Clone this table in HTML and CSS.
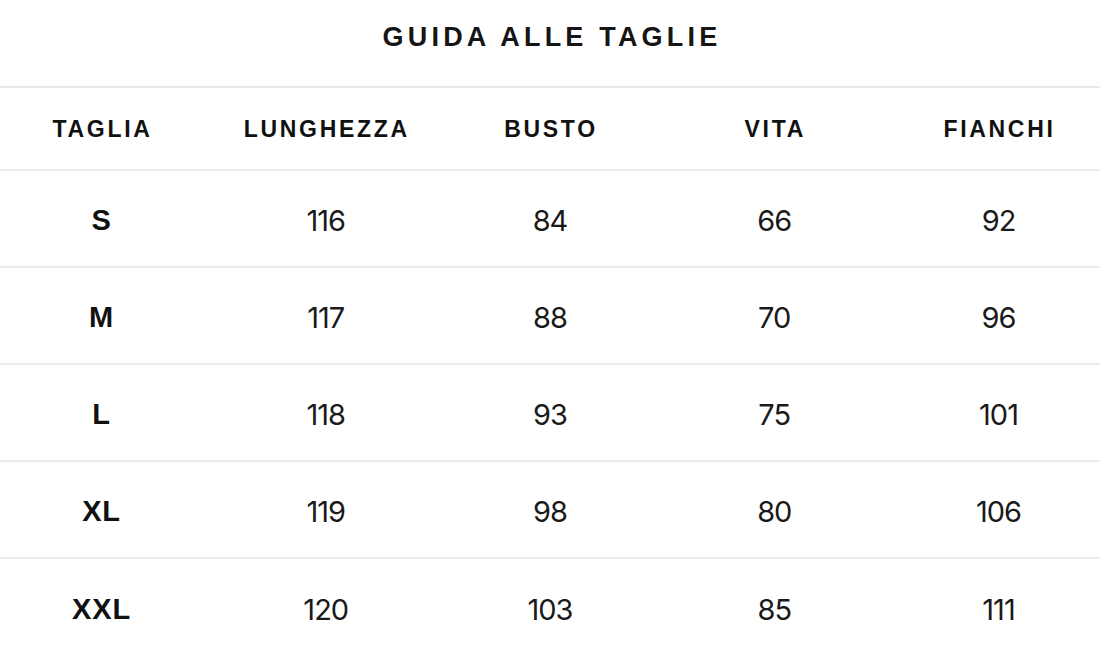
FILE: index.html
```
<!DOCTYPE html>
<html lang="it">
<head>
<meta charset="utf-8">
<title>Guida alle taglie</title>
<link rel="stylesheet" href="styles.css">
</head>
<body>
<div class="page">
  <h1 class="title">GUIDA ALLE TAGLIE</h1>
  <div class="table">
    <div class="row head">
      <div class="cell">TAGLIA</div>
      <div class="cell">LUNGHEZZA</div>
      <div class="cell">BUSTO</div>
      <div class="cell">VITA</div>
      <div class="cell">FIANCHI</div>
    </div>
    <div class="row body">
      <div class="cell size">S</div>
      <div class="cell num">116</div>
      <div class="cell num">84</div>
      <div class="cell num">66</div>
      <div class="cell num">92</div>
    </div>
    <div class="row body">
      <div class="cell size">M</div>
      <div class="cell num">117</div>
      <div class="cell num">88</div>
      <div class="cell num">70</div>
      <div class="cell num">96</div>
    </div>
    <div class="row body">
      <div class="cell size">L</div>
      <div class="cell num">118</div>
      <div class="cell num">93</div>
      <div class="cell num">75</div>
      <div class="cell num">101</div>
    </div>
    <div class="row body">
      <div class="cell size">XL</div>
      <div class="cell num">119</div>
      <div class="cell num">98</div>
      <div class="cell num">80</div>
      <div class="cell num">106</div>
    </div>
    <div class="row body last">
      <div class="cell size">XXL</div>
      <div class="cell num">120</div>
      <div class="cell num">103</div>
      <div class="cell num">85</div>
      <div class="cell num">111</div>
    </div>
  </div>
</div>
</body>
</html>
```
FILE: styles.css
```
* { box-sizing: border-box; }
html, body {
  margin: 0;
  padding: 0;
  background: #ffffff;
}
body {
  font-family: "Liberation Sans", Arial, sans-serif;
  color: #111111;
  overflow: hidden;
}
.page {
  width: 1100px;
  height: 654px;
  overflow: hidden;
}
.title {
  margin: 0;
  height: 88px;
  padding-top: 22px;
  padding-left: 4px;
  text-align: center;
  font-size: 27px;
  line-height: 30px;
  font-weight: 700;
  letter-spacing: 4.2px;
  color: #151515;
  border-bottom: 2px solid #e9e9e5;
}
.row {
  display: grid;
  grid-template-columns: repeat(5, 224.25px);
  justify-content: center;
  align-items: center;
  border-bottom: 2px solid #ecebe7;
}
.head {
  height: 83px;
  padding-top: 1px;
}
.body {
  height: 97px;
  padding-top: 3px;
}
.last {
  border-bottom: none;
}
.cell {
  text-align: center;
}
.head .cell {
  font-size: 23px;
  font-weight: 700;
  letter-spacing: 2.7px;
  padding-left: 2px;
  color: #111111;
}
.size {
  font-size: 29px;
  font-weight: 700;
  letter-spacing: 0.8px;
  color: #111111;
}
.num {
  font-family: Inter, "Open Sans", sans-serif;
  font-variant-numeric: proportional-nums;
  font-size: 29px;
  font-weight: 400;
  letter-spacing: -1px;
  color: #1a1a1a;
}
```
